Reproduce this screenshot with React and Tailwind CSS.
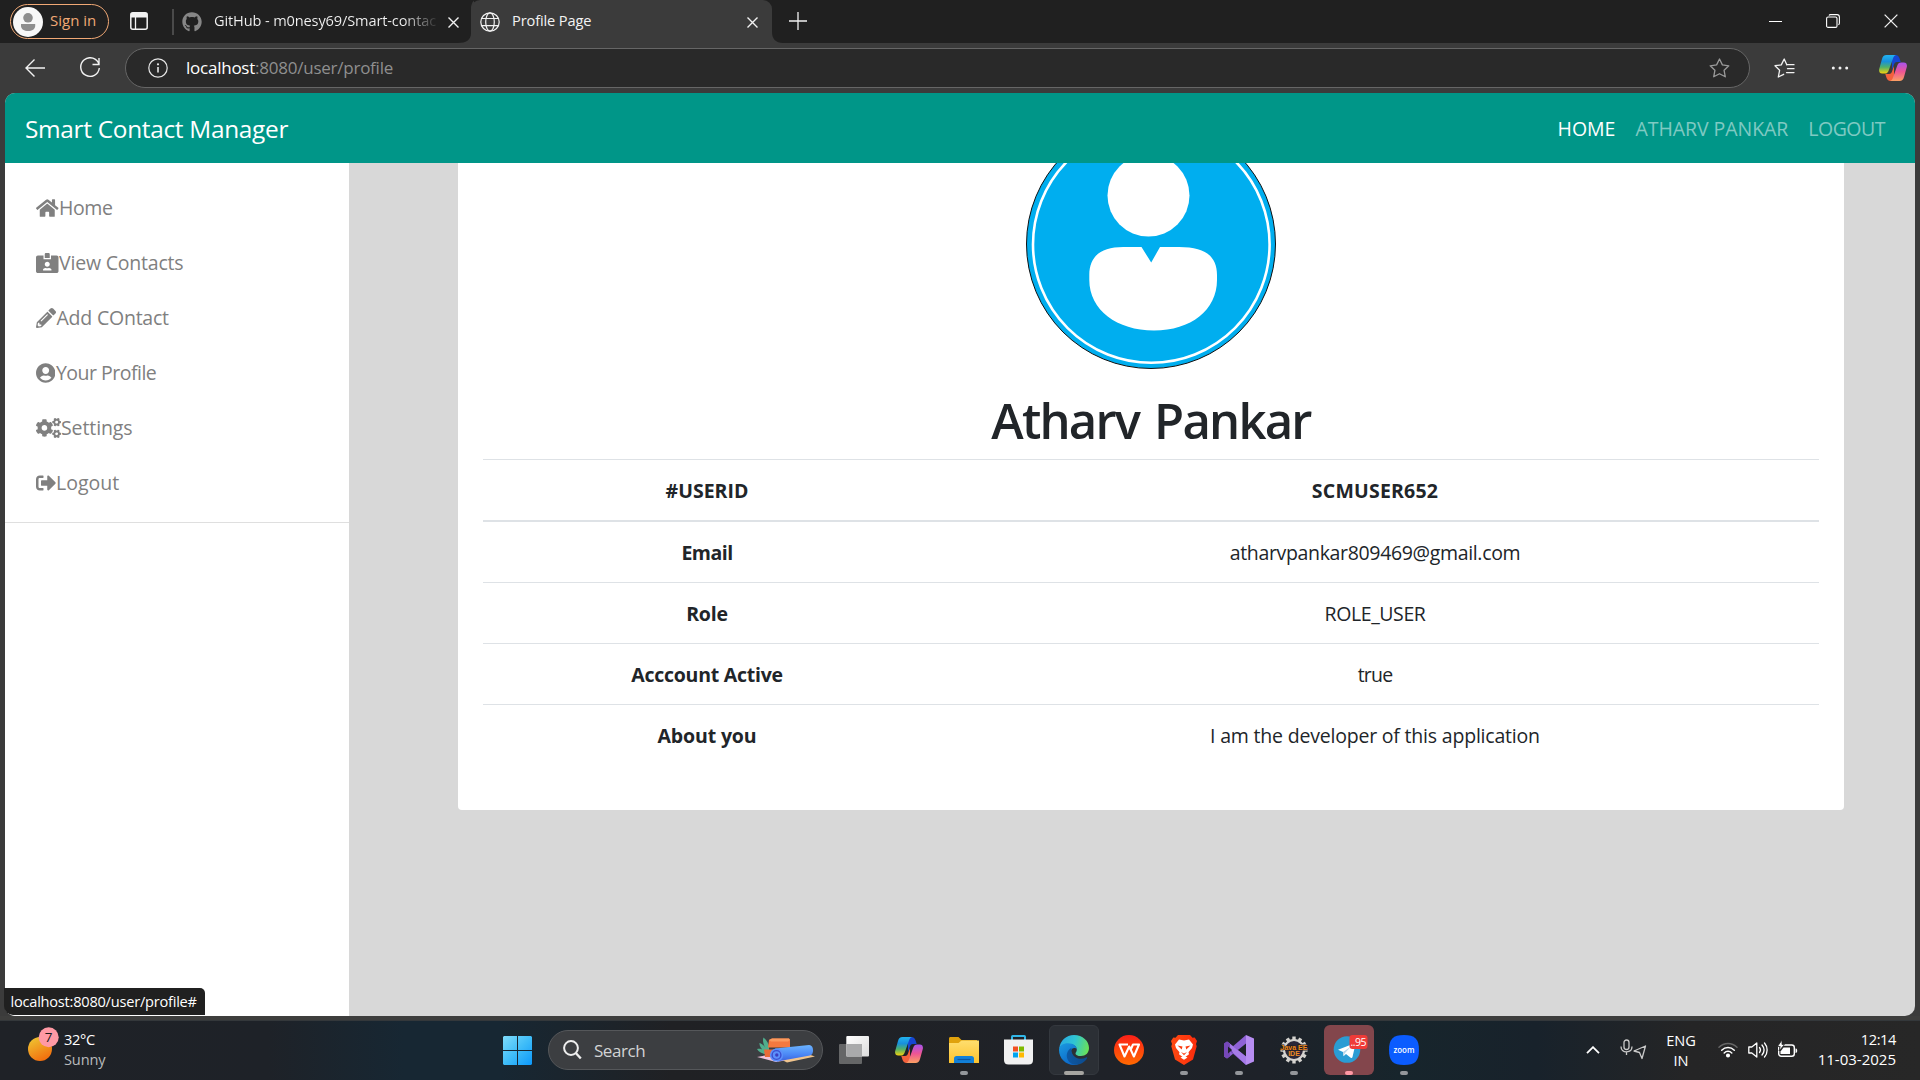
import React from 'react';
import { FaHome, FaIdCardAlt, FaPencilAlt, FaUserCircle, FaCogs, FaSignOutAlt, FaGithub } from 'react-icons/fa';

const MENU = [
  { Icon: FaHome, icon: 'w-[22.5px]', label: 'Home', text: 'ml-[0.5px] tracking-[-0.4px]' },
  { Icon: FaIdCardAlt, icon: 'w-[22.5px]', label: 'View Contacts', text: 'ml-[0.5px] tracking-[-0.2px]' },
  { Icon: FaPencilAlt, icon: 'w-[20px]', label: 'Add COntact', text: 'ml-[0.5px] tracking-[-0.22px]' },
  { Icon: FaUserCircle, icon: 'w-[19.4px]', label: 'Your Profile', text: 'ml-[0.5px] tracking-[-0.5px]' },
  { Icon: FaCogs, icon: 'w-[25px]', label: 'Settings', text: 'tracking-[-0.1px]' },
  { Icon: FaSignOutAlt, icon: 'w-[20px]', label: 'Logout', text: '' },
];

const ROWS = [
  { label: 'Email', l: 'tracking-[-0.5px]', value: 'atharvpankar809469@gmail.com', v: 'tracking-[-0.34px]' },
  { label: 'Role', l: 'tracking-[-0.2px]', value: 'ROLE_USER', v: 'tracking-[-0.4px]' },
  { label: 'Acccount Active', l: 'tracking-[-0.25px]', value: 'true', v: 'tracking-[-0.8px]' },
  { label: 'About you', l: 'tracking-[-0.15px]', value: 'I am the developer of this application', v: 'tracking-[-0.2px]' },
];

function Cross({ className, size = 11, w = 1.4 }) {
  return (
    <svg className={className} width={size} height={size} viewBox="0 0 11 11" fill="none" stroke="#f2f2f2" strokeWidth={w}>
      <path d="M.5.5l10 10M10.5.5l-10 10" />
    </svg>
  );
}

function Copilot({ id }) {
  return (
    <svg width="28" height="26" viewBox="0 0 28 26">
      <defs>
        <linearGradient id={id + 'a'} x1="0" y1="0" x2="0" y2="1">
          <stop offset="0" stopColor="#22b3f0" />
          <stop offset=".35" stopColor="#1890dc" />
          <stop offset=".65" stopColor="#4fb06a" />
          <stop offset="1" stopColor="#f6d20b" />
        </linearGradient>
        <linearGradient id={id + 'b'} x1="0" y1="0" x2="0" y2="1">
          <stop offset="0" stopColor="#a653ef" />
          <stop offset=".5" stopColor="#ee5594" />
          <stop offset="1" stopColor="#fba063" />
        </linearGradient>
      </defs>
      <path d="M13 0h3.500c2.300 0 3.300 1.400 4 3.300L21.700 7H18c-1.800 0-2.600 1.200-3.200 3L13 15z" fill="#1646d2" />
      <path d="M15 26h-3.500c-2.300 0-3.300-1.400-4-3.300L6.300 19H10c1.800 0 2.600-1.200 3.200-3L15 11z" fill="#f3613c" />
      <path d="M7.500 0H17c-1.700.3-2.400 1.600-3 3.400l-4.300 12c-.7 2-1.700 3.200-4 3.200H3.200C.8 18.600-.4 16.800.200 14L3 4C3.700 1.500 5 0 7.500 0z" fill={`url(#${id}a)`} />
      <path d="M20.500 26H11c1.700-.3 2.400-1.600 3-3.400l4.300-12c.7-2 1.700-3.200 4-3.200h2.500c2.400 0 3.600 1.800 3 4.600L25 22c-.7 2.500-2 4-4.500 4z" fill={`url(#${id}b)`} />
    </svg>
  );
}

function Star({ color, list }) {
  return (
    <svg width="22" height="20" viewBox="0 0 22 20" fill="none" stroke={color} strokeWidth="1.300" strokeLinejoin="round" strokeLinecap="round">
      {list ? (
        <>
          <path d="M12.800 6.700L10.200 1 7.300 6.900 1 7.700l4.600 4.600L4.300 19l5.400-2.700" />
          <path d="M12.800 6.700H20M13.500 10.700H20M12.500 14.600H20" />
        </>
      ) : (
        <path d="M10.500 1l2.900 5.900 6.400.9-4.700 4.500 1.200 6.500-5.800-3.100-5.800 3.100 1.200-6.500L1.200 7.800l6.400-.9z" />
      )}
    </svg>
  );
}

function TabStrip() {
  return (
    <div className="flex h-[43px] bg-[#202020] text-[14.6px] text-[#f3f3f3]">
      <div className="mt-[4px] ml-[10px] flex h-[35px] w-[99px] items-center rounded-full border border-[#f0a875] pl-[2px] text-[15px] text-[#f0a875]">
        <svg width="30" height="30" viewBox="0 0 30 30" className="mr-[7px]">
          <circle cx="15" cy="15" r="15" fill="#f7f7f7" />
          <circle cx="15" cy="10.800" r="4.800" fill="#8d8d8d" />
          <path d="M8 17h14.200v1.700c0 3.500-3.200 5.300-7.100 5.300S8 22.200 8 18.700z" fill="#8d8d8d" />
        </svg>
        <span className="-mt-[2px]">Sign in</span>
      </div>
      <svg width="18" height="18" viewBox="0 0 18 18" className="mt-[12px] ml-[21px]" fill="none">
        <rect x=".8" y=".8" width="16.400" height="16.400" rx="2" stroke="#f2f2f2" strokeWidth="1.500" />
        <path d="M1 1h16v4.500H1z" fill="#f2f2f2" />
        <path d="M5.500 5v12" stroke="#f2f2f2" strokeWidth="1.300" />
      </svg>
      <div className="mt-[9px] ml-[24px] h-[26px] w-[2px] bg-[#4a4a4a]" />
      <FaGithub className="mt-[12px] ml-[8px] h-[20px] w-[20px] text-[#868686]" />
      <div className="mt-[9px] ml-[12px] h-[22px] w-[223px] overflow-hidden bg-gradient-to-r from-[#f3f3f3] from-85% to-[#303030] bg-clip-text leading-[22px] tracking-[-0.14px] whitespace-nowrap text-transparent">GitHub - m0nesy69/Smart-contac</div>
      <Cross className="mt-[17px] ml-[11px]" />
      <div className="-ml-[1px] flex w-[325px]">
        <svg width="16" height="43" viewBox="0 0 16 43" className="shrink-0"><path d="M0 43c8 0 13-3 13-10V10C13 5 14 2 16 .500V43z" fill="#3b3b3b" /></svg>
        <div className="-ml-[3px] flex w-[301px] shrink-0 rounded-t-[9px] bg-[#3b3b3b]">
          <svg width="20" height="20" viewBox="0 0 20 20" className="mt-[12px] ml-[9px]" fill="none" stroke="#f2f2f2" strokeWidth="1.200">
            <circle cx="10" cy="10" r="9.200" /><ellipse cx="10" cy="10" rx="4.300" ry="9.200" /><path d="M1.600 6.500h16.800M1.600 13.700h16.800" />
          </svg>
          <span className="mt-[9px] ml-[12px] leading-[22px] tracking-[-0.12px]">Profile Page</span>
          <Cross className="mt-[17px] mr-[14px] ml-auto" />
        </div>
        <svg width="11" height="11" viewBox="0 0 11 11" className="mt-auto shrink-0"><path d="M0 0c0 7 4 11 11 11H0z" fill="#3b3b3b" /></svg>
      </div>
      <svg width="18" height="18" viewBox="0 0 18 18" className="mt-[12px] ml-[6px]"><path d="M9 0v18M0 9h18" stroke="#f2f2f2" strokeWidth="1.300" /></svg>
      <div className="mt-[14px] mr-[22px] ml-auto flex gap-[44px]">
        <svg width="13" height="14" viewBox="0 0 13 14"><path d="M0 7.500h13" stroke="#fff" /></svg>
        <svg width="14" height="14" viewBox="0 0 14 14" fill="none" stroke="#fff" strokeWidth="1.100"><rect x=".6" y="3" width="10.400" height="10.400" rx="1.500" /><path d="M3 1.400C3.300.8 3.800.6 4.500.6h6.500c1.500 0 2.400.9 2.400 2.400V9c0 .9-.3 1.500-1 1.800" /></svg>
        <Cross size={14} w={1} />
      </div>
    </div>
  );
}

function Toolbar() {
  return (
    <div className="flex h-[50px] items-start bg-[#3b3b3b]">
      <svg width="20" height="18" viewBox="0 0 20 18" className="mt-[16px] ml-[25px]" fill="none" stroke="#f2f2f2" strokeWidth="1.400"><path d="M9.500.5L1 9l8.500 8.500M1 9h19" /></svg>
      <svg width="22" height="22" viewBox="0 0 22 22" className="mt-[14px] ml-[34px]" fill="none" stroke="#f2f2f2" strokeWidth="1.400"><path d="M20 7.500A9.300 9.300 0 1 0 20.300 11M20 1v6.500h-6.500" /></svg>
      <div className="mt-[5px] ml-[24px] flex h-[40px] w-[1625px] items-center rounded-full border border-[#666] bg-[#292929]">
        <svg width="20" height="20" viewBox="0 0 20 20" className="ml-[22px]" fill="none" stroke="#e6e6e6" strokeWidth="1.200"><circle cx="10" cy="10" r="9.200" /><path d="M10 9v5.500" strokeWidth="1.600" /><circle cx="10" cy="6.300" r=".5" fill="#e6e6e6" /></svg>
        <span className="ml-[18px] text-[17px] tracking-[-0.24px] text-[#8f8f8f]"><span className="text-white">localhost</span>:8080/user/profile</span>
        <div className="mr-[18px] ml-auto"><Star color="#9a9a9a" /></div>
      </div>
      <div className="mt-[15px] ml-[24px]"><Star color="#f2f2f2" list /></div>
      <svg width="18" height="4" viewBox="0 0 18 4" className="mt-[23px] ml-[35px]" fill="#f2f2f2"><circle cx="2.300" cy="2" r="1.500" /><circle cx="9" cy="2" r="1.500" /><circle cx="15.700" cy="2" r="1.500" /></svg>
      <div className="mt-[12px] ml-[30px]"><Copilot id="top" /></div>
    </div>
  );
}

function Avatar() {
  return (
    <svg width="250" height="250" viewBox="0 0 250 250" className="block shrink-0">
      <circle cx="125" cy="125" r="124.500" fill="#00aeef" stroke="#111" />
      <circle cx="125.300" cy="125.500" r="118.300" fill="none" stroke="#fff" strokeWidth="2.600" />
      <circle cx="122.500" cy="76.500" r="41" fill="#fff" />
      <path d="M115.500 128l9.700 15.500 8.800-15.500h19c26 0 38 9 38 28v5c0 30-26 50.500-63 50.500S63.300 191 63.300 161v-5c0-19 12-28 34-28z" fill="#fff" />
    </svg>
  );
}

function Page() {
  return (
    <div className="relative mx-[5px] flex h-[923px] w-[1910px] flex-col overflow-hidden rounded-[10px] bg-[#d8d8d8]">
      <nav className="flex h-[70px] shrink-0 items-center bg-[#009688] pt-[2px] pr-[30px] pl-[20px] text-white">
        <span className="text-[24.4px] tracking-[-0.3px]">Smart Contact Manager</span>
        <div className="ml-auto flex gap-[20px] text-[19.5px] text-white/50">
          <span className="text-white">HOME</span>
          <span className="tracking-[-0.05px]">ATHARV PANKAR</span>
          <span className="tracking-[-0.5px]">LOGOUT</span>
        </div>
      </nav>
      <div className="flex min-h-0 flex-1">
        <aside className="w-[344px] shrink-0 bg-white">
          <div className="border-b border-[#dfdfdf] pt-[17px] pb-[12px] pl-[31px]">
            {MENU.map(({ Icon, icon, label, text }) => (
              <div key={label} className="flex h-[55px] items-center text-[19.5px] text-[#808080]">
                <Icon className={`h-[20px] ${icon}`} />
                <span className={text}>{label}</span>
              </div>
            ))}
          </div>
        </aside>
        <main className="min-w-0 flex-1 overflow-hidden">
          <div className="-mt-[44px] ml-[109px] flex w-[1386px] flex-col items-center rounded-b-[4px] bg-white px-[25px] pb-[45px] text-[#212529]">
            <Avatar />
            <h1 className="mt-[21px] mb-[9px] h-[60px] text-[49px] leading-[60px] font-[550] tracking-[-1.8px] [word-spacing:4px]">Atharv Pankar</h1>
            <div className="w-full text-center text-[19.5px]">
              <div className="grid h-[63px] grid-cols-[448px_1fr] items-center border-t border-b-2 border-[#dee2e6] pt-[2px] font-bold">
                <span>#USERID</span>
                <span className="tracking-[0.2px]">SCMUSER652</span>
              </div>
              {ROWS.map((r, i) => (
                <div key={r.label} className={`grid grid-cols-[448px_1fr] items-center pt-[2px] ${i ? 'h-[61px] border-t border-[#dee2e6]' : 'h-[60px]'}`}>
                  <span className={`font-bold ${r.l}`}>{r.label}</span>
                  <span className={r.v}>{r.value}</span>
                </div>
              ))}
            </div>
          </div>
        </main>
      </div>
    </div>
  );
}

function Cell({ children, run, active, className = '' }) {
  return (
    <div className="relative flex h-[58px] w-[55px] items-start justify-center pt-[4px]">
      <div className={`flex h-[50px] w-[50px] items-center justify-center rounded-[6px] ${className}`}>{children}</div>
      {run && <div className={`absolute bottom-[4px] h-[4px] rounded-full ${run} ${active ? 'w-[20px]' : 'w-[8px]'}`} />}
    </div>
  );
}

const TEETH = [0, 30, 60, 90, 120, 150, 180, 210, 240, 270, 300, 330];

function Taskbar() {
  return (
    <div className="flex h-[60px] border-t border-[#34383b] text-[14.6px] text-white">
      <div className="flex w-full bg-[linear-gradient(90deg,#1f2227_0%,#1e2228_14%,#172733_21%,#172733_26%,#202124_35%,#1f2228_57%,#1e2229_66%,#17252c_73%,#18222b_80%,#252526_88%,#272727_100%)]">
        <div className="flex w-[503px] pl-[28px]">
          <svg width="31" height="34" viewBox="0 0 31 34" className="mt-[6px]">
            <defs><linearGradient id="sun" x1=".2" y1="0" x2=".7" y2="1"><stop offset="0" stopColor="#eec432" /><stop offset="1" stopColor="#f36a0c" /></linearGradient></defs>
            <circle cx="12" cy="22" r="12" fill="url(#sun)" />
            <circle cx="20.700" cy="10.200" r="10" fill="#ff99a4" />
            <text x="20.700" y="15" textAnchor="middle" fontSize="13.500" fill="#1a1a1a" fontFamily="Open Sans">7</text>
          </svg>
          <div className="mt-[8px] ml-[5px] leading-[20px]">
            <div className="tracking-[-0.3px]">32°C</div>
            <div className="tracking-[-0.15px] text-[#b8babc]">Sunny</div>
          </div>
        </div>
        <svg width="29" height="29" viewBox="0 0 29 29" className="mt-[15px] shrink-0">
          <defs><linearGradient id="win" x1="0" y1="0" x2="1" y2="1"><stop offset="0" stopColor="#7fdcfb" /><stop offset=".5" stopColor="#40bdf8" /><stop offset="1" stopColor="#0c98fb" /></linearGradient></defs>
          <path d="M1 0h13v14H0V1zM15 0h13l1 1v13H15zM0 15h14v14H1l-1-1zM15 15h14v13l-1 1H15z" fill="url(#win)" />
        </svg>
        <div className="mt-[9px] ml-[16px] flex h-[40px] w-[275px] shrink-0 items-center rounded-full border border-[#55575a] bg-[#3c3e41] pr-[6px] pl-[14px]">
          <svg width="19" height="20" viewBox="0 0 19 20" fill="none" stroke="#eee" strokeWidth="2"><circle cx="8" cy="8" r="6.900" /><path d="M12.800 13l5 5.500" strokeWidth="2.400" /></svg>
          <span className="mt-[1px] ml-[12px] text-[17px] tracking-[-0.45px] text-[#d2d3d4]">Search</span>
          <svg width="59" height="27" viewBox="0 0 59 27" className="ml-auto">
            <defs><linearGradient id="mat" x1="0" y1="0" x2="0" y2="1"><stop offset="0" stopColor="#6bb4ff" /><stop offset=".6" stopColor="#4a86f5" /><stop offset="1" stopColor="#3b5fd8" /></linearGradient></defs>
            <path d="M0 20l11-2 44-1-24 6-12 2z" fill="#f1c3dd" /><path d="M30 25.500l28-6-6-2-26 6z" fill="#f0c48d" />
            <path d="M9 16C5 13 2 9 2.500 6c3 1 5 3 6 5C6 7 5.500 3 6.500.5 10 3 12 7 12 11v5zM0 12c4-1 8 1 10 5-5 0-8-2-10-5z" fill="#4fae8d" />
            <path d="M7 12.500h14V20H8z" fill="#e96a38" /><path d="M12 3l3-1.500h17L33 3v7.500H11z" fill="#f4793f" /><path d="M12 3l3-1.500h17L33 3l-2 1.500H14z" fill="#fb9a5e" />
            <path d="M18 11.500L52 8c5-.3 5.500 9.500 1 10.500l-33 6z" fill="url(#mat)" />
            <circle cx="19.500" cy="18" r="6.600" fill="#5c90fb" /><circle cx="19.500" cy="18" r="4.400" fill="none" stroke="#3b4fd0" strokeWidth="1.400" /><circle cx="19.800" cy="18" r="1.700" fill="#3b3fc0" />
          </svg>
        </div>
        <div className="ml-[3px] flex">
          <Cell>
            <svg width="30" height="28" viewBox="0 0 30 28" className="-mt-[1px]">
              <defs><linearGradient id="tv" x1="0" y1="0" x2="1" y2="1"><stop offset="0" stopColor="#fff" /><stop offset="1" stopColor="#dcdcdc" /></linearGradient></defs>
              <rect y="8" width="23" height="20" rx="1" fill="#656667" /><rect x="7.300" width="22.700" height="20.500" rx="1" fill="url(#tv)" /><path d="M7.300 8H23v12.500H7.300z" fill="#a9aaab" />
            </svg>
          </Cell>
          <Cell><Copilot id="bar" /></Cell>
          <Cell run="bg-[#94979b]">
            <svg width="30" height="27" viewBox="0 0 30 27" className="mt-[1px]">
              <defs><linearGradient id="fold" x1="0" y1="0" x2="0" y2="1"><stop offset="0" stopColor="#ffde6e" /><stop offset="1" stopColor="#fcc22e" /></linearGradient></defs>
              <path d="M0 1.500C0 .6.600 0 1.500 0h8l3 3H28v6H0z" fill="#e0a20d" /><path d="M0 6h9.500l3-2.500H30V26H0z" fill="url(#fold)" />
              <path d="M5 21.500c0-1.500 1-2.500 2.500-2.500h15c1.500 0 2.500 1 2.500 2.500V26H5z" fill="#1280d8" /><path d="M8.500 22.500h13" stroke="#0d56a0" strokeWidth="1.200" />
            </svg>
          </Cell>
          <Cell>
            <svg width="29" height="30" viewBox="0 0 29 30" className="-ml-[1px]">
              <path d="M8 6V1.700C8 1.200 8.200 1 8.700 1h11.600c.5 0 .7.200.7.700V6" fill="none" stroke="#31b7e8" strokeWidth="2" />
              <path d="M0 4.500h29V25c0 3-1.500 4.500-4.500 4.500h-20C1.500 29.500 0 28 0 25z" fill="#f1f1f1" />
              <path d="M9 11.500h5v5H9z" fill="#f25022" /><path d="M15 11.500h5v5h-5z" fill="#7fba00" /><path d="M9 17.500h5v5H9z" fill="#00a4ef" /><path d="M15 17.500h5v5h-5z" fill="#ffb900" />
            </svg>
          </Cell>
          <Cell run="bg-[#a6a5a1]" active className="border border-[#34383e] bg-[#2b2f35]">
            <svg width="30" height="30" viewBox="0 0 30 30">
              <defs>
                <linearGradient id="e1" x1="0" y1=".3" x2="1" y2=".5"><stop offset="0" stopColor="#28a9e4" /><stop offset=".5" stopColor="#30c5d2" /><stop offset="1" stopColor="#69e15a" /></linearGradient>
                <linearGradient id="e2" x1="0" y1="0" x2=".6" y2="1"><stop offset="0" stopColor="#1b9ae0" /><stop offset="1" stopColor="#0b66c8" /></linearGradient>
                <linearGradient id="e3" x1="0" y1="0" x2="1" y2="0"><stop offset="0" stopColor="#0e59a4" /><stop offset="1" stopColor="#0c4a8c" /></linearGradient>
              </defs>
              <path d="M.3 13.500C1 5.500 7.300 0 15 0c8.700 0 15 6 15 13 0 5-3.500 8-8 8-3.500 0-5.500-1.300-5.500-2.600 0-1 1.300-1.400 1.300-3.900 0-3-3-5.500-7.500-5.500C5.500 9 2 11 .3 13.500z" fill="url(#e1)" />
              <path d="M0 15C0 11 4 8.300 9 8.300c5.500 0 8.800 3 8.800 6.200-1.500-2.500-5.300-1.800-6 2-.9 5.500 3.200 11 8.500 12.300-1.700.8-3.500 1.200-5.300 1.200C6.700 30 0 23.300 0 15z" fill="url(#e2)" />
              <path d="M12.500 12.800c-3 1.700-4.800 4.500-4.800 7.700 0 4.800 4 9.500 9.300 9.300 4.500-.3 8.700-2.600 11-6.300.5-.8-.2-1.500-1-1-3.300 1.800-7.500 1.800-10.300 0-3.200-2-4.700-5.300-4.200-9.700z" fill="url(#e3)" />
            </svg>
          </Cell>
          <Cell>
            <svg width="30" height="30" viewBox="0 0 30 30">
              <defs><linearGradient id="wps" x1="0" y1="0" x2="0" y2="1"><stop offset="0" stopColor="#fc2018" /><stop offset="1" stopColor="#ff6a00" /></linearGradient></defs>
              <circle cx="15" cy="15" r="15" fill="url(#wps)" /><path d="M14 9.500H5.500l5 12 4.700-10 4.700 10L25 9.500h-6l-2 4.500" fill="none" stroke="#fff" strokeWidth="2.100" strokeLinejoin="round" />
            </svg>
          </Cell>
          <Cell run="bg-[#94979b]">
            <svg width="26" height="30" viewBox="0 0 26 30">
              <defs><linearGradient id="brv" x1="0" y1="0" x2="1" y2="0"><stop offset="0" stopColor="#ff4a12" /><stop offset="1" stopColor="#fb2c0c" /></linearGradient></defs>
              <path d="M7 0h12l2.500 2.700 2.200-.3L26 6l-1 3 .7 2.300L22 24.500 13 30 4 24.500.3 11.300 1 9 0 6l2.300-3.600 2.200.3z" fill="url(#brv)" />
              <path d="M8 4.500l5 .9 5-.9L22 9.500l-1 3.500-3.500 4.300.5 2-5 3.700-5-3.700.5-2L5 13 4 9.500z" fill="#fff" />
              <path d="M13 24.800l-3.500-2.200 3.500-1.500 3.500 1.500z" fill="#fff" />
              <path d="M6.500 10.500l5 1-.8 3zM19.500 10.500l-5 1 .8 3zM13 7.500v7M10 17l3 1.500 3-1.500-3 3.300z" fill="#fb3c10" />
            </svg>
          </Cell>
          <Cell run="bg-[#94979b]">
            <svg width="30" height="30" viewBox="0 0 30 30">
              <path d="M22 0l8 3.500v23L22 30z" fill="#b78df2" /><path d="M22 0v8.500L6 21.300l-3 2.200-3-2V19z" fill="#8f62d6" />
              <path d="M3 6.500l3 2.200L22 21.500V30L0 11V8.500z" fill="#6b3fb0" /><path d="M3 6.500l3 2.200L22 21.500V30L9 18z" fill="#a57be8" /><path d="M0 8.500l3-2 3 2.200V21.300l-3 2.200-3-2z" fill="#7548b8" /><path d="M4 11.500v7L8 15z" fill="#1f2228" />
            </svg>
          </Cell>
          <Cell run="bg-[#94979b]">
            <svg width="36" height="28" viewBox="-18 -14 36 28">
              {TEETH.map((a) => <rect key={a} x="-1.700" y="-13.500" width="3.400" height="5" fill="#d5d3cf" transform={`rotate(${a})`} />)}
              <circle r="10" fill="#2a2638" stroke="#d5d3cf" strokeWidth="2.200" />
              <text textAnchor="middle" y="-.500" fontSize="7" fontWeight="700" fill="#ef8a22" stroke="#201510" strokeWidth="1" paintOrder="stroke" fontFamily="Liberation Sans">Java EE</text>
              <text textAnchor="middle" y="6" fontSize="7" fontWeight="700" fill="#ef8a22" fontFamily="Liberation Sans">IDE</text>
            </svg>
          </Cell>
          <Cell run="bg-[#ff99a4]" className="bg-[#83464c]">
            <svg width="38" height="30" viewBox="0 0 38 30" className="ml-[5px]">
              <circle cx="15" cy="14.500" r="13.300" fill="#2a9cd4" /><path d="M6 14.800L22 8.500c1-.3 1.500.2 1.300 1.300L20.500 22c-.3 1-1 1.200-1.800.7L14 19l-2.500 2.200L11 17z" fill="#fff" /><path d="M11 17l8-5.500-6 6.500-1.500 3z" fill="#b9d5e8" />
              <rect x="17.500" width="18" height="14" rx="3" fill="#ef3b38" /><text x="26.500" y="11" textAnchor="middle" fontSize="10.500" fill="#fff" fontFamily="Open Sans" textLength="16">..95</text>
            </svg>
          </Cell>
          <Cell run="bg-[#94979b]">
            <svg width="30" height="30" viewBox="0 0 30 30">
              <path d="M15 0c11 0 15 4 15 15s-4 15-15 15S0 26 0 15 4 0 15 0z" fill="#0b5cff" />
              <text x="15" y="17.500" textAnchor="middle" fontSize="8.500" fontWeight="600" fill="#fff" fontFamily="Open Sans" textLength="21" lengthAdjust="spacingAndGlyphs">zoom</text>
            </svg>
          </Cell>
        </div>
        <div className="mr-[24px] ml-auto flex">
          <svg width="14" height="8" viewBox="0 0 14 8" className="mt-[25px]" fill="none" stroke="#fff" strokeWidth="1.800"><path d="M1 7.200L7 1.200l6 6" /></svg>
          <svg width="27" height="21" viewBox="0 0 27 21" className="mt-[18px] ml-[20px]" fill="none" stroke="#c9c9c9" strokeWidth="1.300" strokeLinejoin="round">
            <rect x="4" y="1" width="5" height="9.500" rx="2.500" /><path d="M1 7.500c0 3.500 2.300 5.300 5.500 5.300S12 11 12 7.500M6.500 13v3" /><path d="M25.500 7L14 12l5.500 1.500 2.500 6z" />
          </svg>
          <div className="mt-[9px] ml-[19px] w-[30px] text-center leading-[20px]"><div className="tracking-[-0.05px]">ENG</div><div>IN</div></div>
          <svg width="20" height="16" viewBox="0 0 20 16" className="mt-[21px] ml-[22px]" fill="none" stroke="#fff" strokeWidth="1.500" strokeLinecap="round">
            <path d="M1 5.300c5-5.200 13-5.200 18 0" stroke="#666" /><path d="M3.700 8.200c3.600-3.600 9-3.600 12.600 0M6.200 11c2.200-2.200 5.400-2.200 7.600 0" /><circle cx="10" cy="13.500" r="1.300" fill="#fff" />
          </svg>
          <svg width="20" height="18" viewBox="0 0 20 18" className="mt-[20px] ml-[10px]" fill="none" stroke="#fff" strokeWidth="1.300" strokeLinejoin="round" strokeLinecap="round">
            <path d="M.8 6v6h3l5 4V2l-5 4z" /><path d="M11.500 6.500c1.200 1.500 1.200 3.500 0 5M14 4c2.500 3 2.500 7 0 10" /><path d="M16.500 2c3.500 4 3.500 10 0 14" />
          </svg>
          <svg width="21" height="18" viewBox="0 0 21 18" className="mt-[19px] ml-[9px]">
            <rect x="1.700" y="5" width="15.600" height="11.300" rx="2.500" fill="none" stroke="#fff" strokeWidth="1.400" /><path d="M18.500 8.500c1 0 1.700.5 1.700 2.200s-.7 2.200-1.700 2.200z" fill="#fff" /><path d="M6.500 7.500H13V14H3.500v-2.500z" fill="#fff" /><path d="M5 0L.5 6.500h2.700L2 11l5.500-6.500H5z" fill="#fff" stroke="#262626" strokeWidth=".8" />
          </svg>
          <div className="mt-[8px] ml-[18px] w-[80px] text-right leading-[20px]"><div className="tracking-[-0.4px]">12:14</div><div className="text-[15px]">11-03-2025</div></div>
        </div>
      </div>
    </div>
  );
}

export default function App() {
  return (
    <div className="relative h-[1080px] w-[1920px] overflow-hidden bg-[#3b3b3b] font-['Open_Sans','Noto_Sans',sans-serif]">
      <TabStrip />
      <Toolbar />
      <Page />
      <div className="h-[4px] bg-[#3e3e3d]" />
      <Taskbar />
      <div className="absolute top-[988px] left-[4px] flex h-[27px] w-[201px] items-center rounded-tr-[5px] rounded-bl-[9px] bg-[#202020] pl-[6.5px] text-[14.6px] tracking-[-0.23px] text-white">
        <span>localhost:8080/user/profile#</span>
      </div>
    </div>
  );
}
